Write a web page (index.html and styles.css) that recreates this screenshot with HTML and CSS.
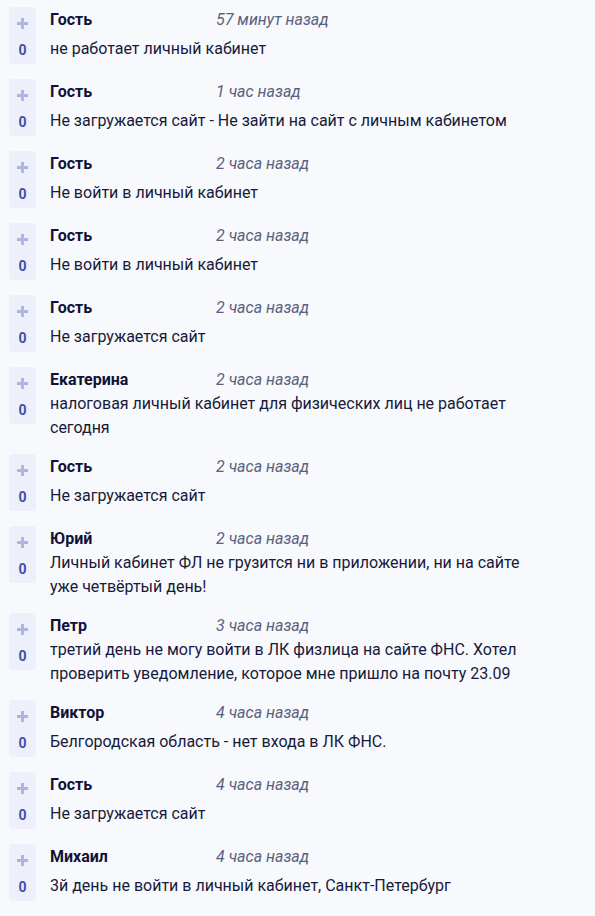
FILE: index.html
```html
<!DOCTYPE html>
<html lang="ru">
<head>
<meta charset="utf-8">
<link rel="stylesheet" href="styles.css">
</head>
<body>
<div class="comments">
  <div class="comment">
    <div class="vote"><svg class="plus" viewBox="0 0 11 11"><rect x="4" y="0" width="3" height="11"/><rect x="0" y="4" width="11" height="3"/></svg><span class="score">0</span></div>
    <div class="body"><div class="head"><span class="name">Гость</span><span class="date">57 минут назад</span></div><div class="text"><p>не работает личный кабинет</p></div></div>
  </div>
  <div class="comment">
    <div class="vote"><svg class="plus" viewBox="0 0 11 11"><rect x="4" y="0" width="3" height="11"/><rect x="0" y="4" width="11" height="3"/></svg><span class="score">0</span></div>
    <div class="body"><div class="head"><span class="name">Гость</span><span class="date">1 час назад</span></div><div class="text"><p>Не загружается сайт - Не зайти на сайт с личным кабинетом</p></div></div>
  </div>
  <div class="comment">
    <div class="vote"><svg class="plus" viewBox="0 0 11 11"><rect x="4" y="0" width="3" height="11"/><rect x="0" y="4" width="11" height="3"/></svg><span class="score">0</span></div>
    <div class="body"><div class="head"><span class="name">Гость</span><span class="date">2 часа назад</span></div><div class="text"><p>Не войти в личный кабинет</p></div></div>
  </div>
  <div class="comment">
    <div class="vote"><svg class="plus" viewBox="0 0 11 11"><rect x="4" y="0" width="3" height="11"/><rect x="0" y="4" width="11" height="3"/></svg><span class="score">0</span></div>
    <div class="body"><div class="head"><span class="name">Гость</span><span class="date">2 часа назад</span></div><div class="text"><p>Не войти в личный кабинет</p></div></div>
  </div>
  <div class="comment">
    <div class="vote"><svg class="plus" viewBox="0 0 11 11"><rect x="4" y="0" width="3" height="11"/><rect x="0" y="4" width="11" height="3"/></svg><span class="score">0</span></div>
    <div class="body"><div class="head"><span class="name">Гость</span><span class="date">2 часа назад</span></div><div class="text"><p>Не загружается сайт</p></div></div>
  </div>
  <div class="comment">
    <div class="vote"><svg class="plus" viewBox="0 0 11 11"><rect x="4" y="0" width="3" height="11"/><rect x="0" y="4" width="11" height="3"/></svg><span class="score">0</span></div>
    <div class="body"><div class="head"><span class="name">Екатерина</span><span class="date">2 часа назад</span></div><div class="text"><p>налоговая личный кабинет для физических лиц не работает сегодня</p></div></div>
  </div>
  <div class="comment">
    <div class="vote"><svg class="plus" viewBox="0 0 11 11"><rect x="4" y="0" width="3" height="11"/><rect x="0" y="4" width="11" height="3"/></svg><span class="score">0</span></div>
    <div class="body"><div class="head"><span class="name">Гость</span><span class="date">2 часа назад</span></div><div class="text"><p>Не загружается сайт</p></div></div>
  </div>
  <div class="comment">
    <div class="vote"><svg class="plus" viewBox="0 0 11 11"><rect x="4" y="0" width="3" height="11"/><rect x="0" y="4" width="11" height="3"/></svg><span class="score">0</span></div>
    <div class="body"><div class="head"><span class="name">Юрий</span><span class="date">2 часа назад</span></div><div class="text"><p>Личный кабинет ФЛ не грузится ни в приложении, ни на сайте уже четвёртый день!</p></div></div>
  </div>
  <div class="comment">
    <div class="vote"><svg class="plus" viewBox="0 0 11 11"><rect x="4" y="0" width="3" height="11"/><rect x="0" y="4" width="11" height="3"/></svg><span class="score">0</span></div>
    <div class="body"><div class="head"><span class="name">Петр</span><span class="date">3 часа назад</span></div><div class="text"><p>третий день не могу войти в ЛК физлица на сайте ФНС. Хотел проверить уведомление, которое мне пришло на почту 23.09</p></div></div>
  </div>
  <div class="comment">
    <div class="vote"><svg class="plus" viewBox="0 0 11 11"><rect x="4" y="0" width="3" height="11"/><rect x="0" y="4" width="11" height="3"/></svg><span class="score">0</span></div>
    <div class="body"><div class="head"><span class="name">Виктор</span><span class="date">4 часа назад</span></div><div class="text"><p>Белгородская область - нет входа в ЛК ФНС.</p></div></div>
  </div>
  <div class="comment">
    <div class="vote"><svg class="plus" viewBox="0 0 11 11"><rect x="4" y="0" width="3" height="11"/><rect x="0" y="4" width="11" height="3"/></svg><span class="score">0</span></div>
    <div class="body"><div class="head"><span class="name">Гость</span><span class="date">4 часа назад</span></div><div class="text"><p>Не загружается сайт</p></div></div>
  </div>
  <div class="comment">
    <div class="vote"><svg class="plus" viewBox="0 0 11 11"><rect x="4" y="0" width="3" height="11"/><rect x="0" y="4" width="11" height="3"/></svg><span class="score">0</span></div>
    <div class="body"><div class="head"><span class="name">Михаил</span><span class="date">4 часа назад</span></div><div class="text"><p>3й день не войти в личный кабинет, Санкт-Петербург</p></div></div>
  </div>
</div>
</body>
</html>
```

FILE: styles.css
```css
html, body {
  margin: 0;
  padding: 0;
  background: #f8f9fc;
}
body {
  font-family: Roboto, "Noto Sans", "Liberation Sans", sans-serif;
  font-size: 16px;
  color: #161a3b;
}
.comments {
  display: flex;
  flex-direction: column;
  gap: 15px;
  padding: 7px 48px 0 9px;
}
.comment {
  display: flex;
  align-items: stretch;
  gap: 14px;
}
.vote {
  flex: 0 0 27px;
  height: 57px;
  box-sizing: border-box;
  background: #edf0fa;
  border-radius: 4px;
  display: flex;
  flex-direction: column;
  align-items: center;
  padding-top: 11px;
}
.plus {
  width: 11px;
  height: 11px;
  fill: #aeb5e0;
  display: block;
}
.score {
  margin-top: 14px;
  font-weight: 700;
  font-size: 14px;
  line-height: 14px;
  color: #434fa5;
}
.body {
  flex: 1;
  display: flex;
  flex-direction: column;
  min-width: 0;
  padding-top: 1px;
  margin-bottom: -1px;
}
.head {
  display: flex;
  line-height: 24px;
  height: 24px;
}
.name {
  width: 166px;
  font-weight: 700;
  color: #0f1236;
}
.date {
  font-style: italic;
  color: #5a6180;
}
.text {
  flex: 1;
  display: flex;
  align-items: center;
}
.text p {
  margin: 0;
  line-height: 24px;
}
```
